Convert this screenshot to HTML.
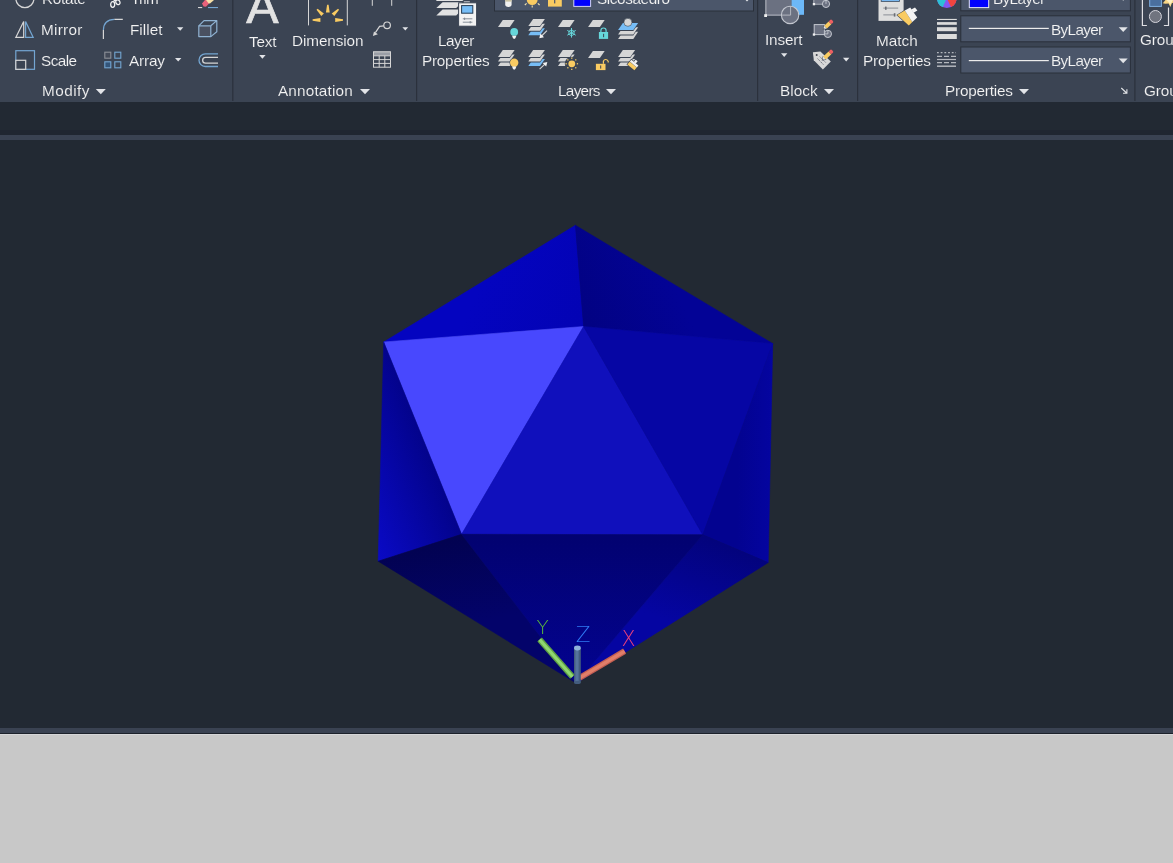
<!DOCTYPE html>
<html><head><meta charset="utf-8">
<style>
html,body{margin:0;padding:0;}
body{width:1173px;height:863px;overflow:hidden;background:#222933;position:relative;font-family:"Liberation Sans","DejaVu Sans",sans-serif;color:#f4f4f4;font-size:15.3px;}
#ribbon{position:absolute;left:0;top:0;width:1173px;height:102px;background:#3b4453;overflow:hidden;}
.t{position:absolute;white-space:nowrap;will-change:transform;line-height:20px;height:20px;-webkit-text-stroke:0.12px #3b4453;}
.t.d{-webkit-text-stroke-color:#4b566a;}
#band{position:absolute;left:0;top:102px;width:1173px;height:33px;background:#222933;}
#line1{position:absolute;left:0;top:135px;width:1173px;height:5px;background:#3a4252;}
#view{position:absolute;left:0;top:140px;width:1173px;height:588px;background:#222933;}
#line2{position:absolute;left:0;top:728px;width:1173px;height:5px;background:#3a4252;}
#line3{position:absolute;left:0;top:733px;width:1173px;height:1px;background:#1c212a;}
#line4{position:absolute;left:0;top:734px;width:1173px;height:1px;background:#d6d6d8;}
#bottom{position:absolute;left:0;top:735px;width:1173px;height:128px;background:#c8c8c8;}
svg{position:absolute;left:0;top:0;}
</style></head><body>
<div id="ribbon">
<!-- RIBBON-START -->
<svg width="1173" height="102" viewBox="0 0 1173 102">
<g fill="#2b313c">
<rect x="232.2" y="0" width="1.2" height="101"/>
<rect x="416.0" y="0" width="1.2" height="101"/>
<rect x="757.0" y="0" width="1.2" height="101"/>
<rect x="857.0" y="0" width="1.2" height="101"/>
<rect x="1134.3" y="0" width="1.2" height="101"/>
</g>
<polygon points="95.8,89.0 105.8,89.0 100.8,94.2" fill="#e2e4e8" />
<polygon points="360.0,89.0 370.0,89.0 365.0,94.2" fill="#e2e4e8" />
<polygon points="606.0,89.0 616.0,89.0 611.0,94.2" fill="#e2e4e8" />
<polygon points="824.0,89.0 834.0,89.0 829.0,94.2" fill="#e2e4e8" />
<polygon points="1019.0,89.0 1029.0,89.0 1024.0,94.2" fill="#e2e4e8" />
<polygon points="177.0,27.2 183.4,27.2 180.2,30.8" fill="#e2e4e8" />
<polygon points="175.0,58.0 181.4,58.0 178.2,61.6" fill="#e2e4e8" />
<polygon points="259.2,55.0 265.6,55.0 262.4,58.8" fill="#e2e4e8" />
<polygon points="402.4,27.3 408.2,27.3 405.3,30.6" fill="#e2e4e8" />
<polygon points="781.0,53.2 787.4,53.2 784.2,56.9" fill="#e2e4e8" />
<polygon points="843.0,57.8 849.4,57.8 846.2,61.5" fill="#e2e4e8" />
<circle cx="24.9" cy="-1.3" r="9" fill="none" stroke="#d6d6d6" stroke-width="1.3"/>
<g fill="none" stroke="#f2f2f2" stroke-width="1.3"><ellipse cx="112.7" cy="4.5" rx="2" ry="2.8"/><ellipse cx="117.9" cy="2.3" rx="2" ry="2.4" transform="rotate(-35 117.9 2.3)"/><path d="M113.6 1.8 L114.6 0 M115.8 1.2 L115 0"/></g>
<g fill="none" stroke-width="1.2"><polygon points="15.8,37.4 23.7,21.6 23.7,37.4" stroke="#d6d6d6"/><polygon points="25.6,21.6 33.2,37.4 25.6,37.4" stroke="#74a6d2"/></g>
<g fill="none" stroke-width="1.2"><path d="M103.4 29.9 Q103.6 19.6 114.4 19.3" stroke="#74a6d2"/><path d="M103.4 38.9 V29.9 M114.4 19.3 H122.8" stroke="#d6d6d6"/></g>
<g fill="none" stroke-width="1.2"><rect x="15.8" y="50.7" width="18.7" height="18.6" stroke="#74a6d2"/><rect x="15.8" y="60.3" width="9.9" height="9" fill="#3b4453" stroke="#d6d6d6"/></g>
<g stroke-width="1.1"><rect x="104.8" y="52.2" width="6" height="6" fill="#434a58" stroke="#8c9098"/><rect x="114.8" y="52.2" width="6" height="6" fill="none" stroke="#74a6d2"/><rect x="104.8" y="61.8" width="6" height="6" fill="#33557a" stroke="#74a6d2"/><rect x="114.8" y="61.8" width="6" height="6" fill="none" stroke="#74a6d2"/></g>
<polygon points="202,3.6 205,0 209,0 209.6,3 206,6.8 203.6,6.4" fill="#e8627a"/>
<polygon points="206,0 214,0 210,3.4 208.4,3.2" fill="#f6dfa6"/>
<rect x="198" y="7" width="4.2" height="1.1" fill="#d6d6d6"/><rect x="208" y="7" width="10" height="1.1" fill="#74a6d2"/>
<g fill="none" stroke="#8fb2d2" stroke-width="1.2" stroke-linejoin="round"><rect x="198.8" y="25.8" width="12" height="10.8" fill="#4a5161"/><path d="M198.8 25.8 L204 20.6 H216.8 L210.8 25.8 M216.8 20.6 V31.8 L210.8 36.6"/></g>
<g fill="none" stroke-width="1.3"><path d="M218 53.9 H205.3 A6.3 6.3 0 0 0 205.3 66.5 H218" stroke="#74a6d2"/><path d="M218 57.3 H205.6 A2.95 2.95 0 0 0 205.6 63.2 H218" stroke="#d6d6d6"/></g>
<text x="262.4" y="23.4" text-anchor="middle" font-size="48.5" fill="#e2e2e2" stroke="#e2e2e2" stroke-width="0.7" font-family="Liberation Sans, sans-serif">A</text>
<rect x="308" y="0" width="1" height="25.4" fill="#d6d6d6"/><rect x="346.8" y="0" width="1" height="25.4" fill="#d6d6d6"/>
<polygon points="329.7,12.6 328.6,4.8 327.1,4.8 325.9,12.6" fill="#f9cb62" />
<polygon points="323.9,13.5 317.6,8.7 316.5,9.8 321.3,16.1" fill="#f9cb62" />
<polygon points="334.3,16.1 339.1,9.8 338.0,8.7 331.7,13.5" fill="#f9cb62" />
<polygon points="320.4,18.1 312.6,19.2 312.6,20.7 320.4,21.9" fill="#f9cb62" />
<polygon points="335.2,21.9 343.0,20.8 343.0,19.2 335.2,18.1" fill="#f9cb62" />
<rect x="371.8" y="0" width="1" height="5.8" fill="#d6d6d6"/><rect x="391.2" y="0" width="1" height="5.8" fill="#d6d6d6"/>
<g fill="none" stroke="#d6d6d6" stroke-width="1.2"><circle cx="387.1" cy="25.3" r="3.3"/><path d="M383.8 25.8 L379.6 26.3 L375.4 32.6"/></g>
<polygon points="372.9,35.9 374.0,31.4 377.9,34.2" fill="#d6d6d6" />
<rect x="373.3" y="51.6" width="17.2" height="4" fill="#9a9ea6"/>
<g fill="none" stroke="#d6d6d6" stroke-width="1"><rect x="373.5" y="51.8" width="17" height="15.4"/><path d="M373.5 55.8 H390.5 M373.5 59.6 H390.5 M373.5 63.4 H390.5 M379.2 55.8 V67.2 M384.8 55.8 V67.2"/></g>
<polygon points="441.0,-3.5 468.0,-3.5 462.4,0.9 435.8,0.9" fill="#e2e2e2" />
<polygon points="442.6,2.2 462.3,2.2 456.2,8.0 436.3,8.0" fill="#e2e2e2" />
<polygon points="442.6,9.5 462.3,9.5 456.2,15.5 436.3,15.5" fill="#e2e2e2" />
<rect x="463.8" y="1.2" width="6" height="2.2" fill="#b8bcc4"/>
<rect x="458.6" y="2.8" width="18" height="23.4" fill="#f2f2f2" stroke="#3b4453" stroke-width="1"/>
<rect x="461.6" y="5.6" width="11.2" height="7.6" fill="#76bdf6" stroke="#243a52" stroke-width="1"/>
<g stroke="#7c8490" stroke-width="0.9"><path d="M462.8 18.8 H472.4 M464.6 17.6 V20 M462.8 22.2 H472.4 M470.2 21 V23.4"/></g>
<rect x="494.5" y="-3" width="259" height="14" fill="#4b566a" stroke="#2a303b" stroke-width="1"/>
<path d="M505.2 0 H511.6 V4.2 Q511.6 6.9 508.4 6.9 Q505.2 6.9 505.2 4.2 Z" fill="#f2f2f2"/>
<rect x="505.2" y="0" width="6.4" height="1.6" fill="#c9c2a4"/>
<circle cx="532.2" cy="-0.3" r="5.4" fill="#f9cb62"/>
<g stroke="#f3e3b0" stroke-width="1.1"><path d="M526.6 3.4 L524.8 5 M532.2 5.6 V7.6 M537.8 3.4 L539.6 5"/></g>
<rect x="548" y="-2" width="13.8" height="8.6" fill="#f9cb62"/><rect x="554.1" y="0" width="1.2" height="3.4" fill="#4b566a"/>
<rect x="573.8" y="-2" width="16.8" height="8.4" fill="#0000ff" stroke="#d0d0f8" stroke-width="1"/>
<polygon points="743.6,-2.2 750.4,-2.2 747.0,1.6" fill="#e2e4e8" />
<polygon points="502.8,19.9 514.6,19.9 509.8,26.9 498.0,26.9" fill="#d6d6d6" />
<circle cx="514.2" cy="31.9" r="3.9" fill="#66d6da"/>
<polygon points="512.0,35.8 516.4,35.8 515.4,38.2 514.2,38.9 513.0,38.2" fill="#f2f2f2" />
<polygon points="533.1,28.3 544.9,28.3 540.1,35.3 528.3,35.3" fill="#76bdf6" />
<polygon points="533.1,24.7 544.9,24.7 540.1,31.7 528.3,31.7" fill="#3b4453" />
<polygon points="533.1,23.7 544.9,23.7 540.1,30.7 528.3,30.7" fill="#d6d6d6" />
<polygon points="533.1,20.1 544.9,20.1 540.1,27.1 528.3,27.1" fill="#3b4453" />
<polygon points="533.1,19.1 544.9,19.1 540.1,26.1 528.3,26.1" fill="#d6d6d6" />
<path d="M547 30.6 L541.6 36" stroke="#d6d6d6" stroke-width="1.1"/>
<polygon points="539.3,38.3 540.4,33.6 544.0,37.2" fill="#f2f2f2" />
<polygon points="562.8,19.9 574.6,19.9 569.8,26.9 558.0,26.9" fill="#d6d6d6" />
<g stroke="#66d6da" stroke-width="1" fill="none"><path d="M571.5 28 V37.6 M567.3 30.4 L575.7 35.2 M567.3 35.2 L575.7 30.4"/><polygon points="571.5,29.8 574.1,31.3 574.1,34.3 571.5,35.8 568.9,34.3 568.9,31.3" stroke-width="0.9"/></g>
<polygon points="592.9,19.9 604.7,19.9 599.9,26.9 588.1,26.9" fill="#d6d6d6" />
<rect x="598.9" y="32" width="9.2" height="6.9" fill="#66d6da"/>
<path d="M600.9 32 V30.6 A2.6 2.6 0 0 1 606.1 30.6 V32" fill="none" stroke="#66d6da" stroke-width="1.2"/>
<rect x="603.1" y="33.8" width="1" height="3.4" fill="#3b4453"/>
<polygon points="622.9,31.8 638.1,31.8 633.3,38.9 618.1,38.9" fill="#d6d6d6" />
<polygon points="622.9,28.3 638.1,28.3 633.3,35.4 618.1,35.4" fill="#3b4453" />
<polygon points="622.9,27.3 638.1,27.3 633.3,34.4 618.1,34.4" fill="#d6d6d6" />
<polygon points="622.9,23.9 638.1,23.9 633.3,31.0 618.1,31.0" fill="#3b4453" />
<polygon points="622.9,22.9 638.1,22.9 633.3,30.0 618.1,30.0" fill="#76bdf6" />
<circle cx="627.9" cy="22.3" r="4" fill="#d6d6d6" stroke="#3b4453" stroke-width="0.6"/>
<polygon points="502.8,59.1 514.6,59.1 509.8,66.1 498.0,66.1" fill="#d6d6d6" />
<polygon points="502.8,55.6 514.6,55.6 509.8,62.6 498.0,62.6" fill="#3b4453" />
<polygon points="502.8,54.6 514.6,54.6 509.8,61.6 498.0,61.6" fill="#d6d6d6" />
<polygon points="502.8,51.1 514.6,51.1 509.8,58.1 498.0,58.1" fill="#3b4453" />
<polygon points="502.8,50.1 514.6,50.1 509.8,57.1 498.0,57.1" fill="#d6d6d6" />
<circle cx="514.2" cy="62.7" r="4.7" fill="#3b4453"/><circle cx="514.2" cy="62.7" r="4.2" fill="#f9cb62"/>
<polygon points="512.0,66.5 516.4,66.5 515.4,69.0 514.2,69.7 513.0,69.0" fill="#f2f2f2" />
<polygon points="533.1,59.1 544.9,59.1 540.1,66.1 528.3,66.1" fill="#76bdf6" />
<polygon points="533.1,55.6 544.9,55.6 540.1,62.6 528.3,62.6" fill="#3b4453" />
<polygon points="533.1,54.6 544.9,54.6 540.1,61.6 528.3,61.6" fill="#d6d6d6" />
<polygon points="533.1,51.1 544.9,51.1 540.1,58.1 528.3,58.1" fill="#3b4453" />
<polygon points="533.1,50.1 544.9,50.1 540.1,57.1 528.3,57.1" fill="#d6d6d6" />
<path d="M539.6 69.2 L545.4 63.6" stroke="#d6d6d6" stroke-width="1.1"/>
<polygon points="547.3,61.9 546.2,66.6 542.6,63.0" fill="#f2f2f2" />
<polygon points="562.8,59.1 574.6,59.1 569.8,66.1 558.0,66.1" fill="#d6d6d6" />
<polygon points="562.8,55.6 574.6,55.6 569.8,62.6 558.0,62.6" fill="#3b4453" />
<polygon points="562.8,54.6 574.6,54.6 569.8,61.6 558.0,61.6" fill="#d6d6d6" />
<polygon points="562.8,51.1 574.6,51.1 569.8,58.1 558.0,58.1" fill="#3b4453" />
<polygon points="562.8,50.1 574.6,50.1 569.8,57.1 558.0,57.1" fill="#d6d6d6" />
<circle cx="571.8" cy="63.8" r="7" fill="#3b4453"/>
<circle cx="571.8" cy="63.8" r="3.4" fill="#f9cb62"/>
<rect x="576.8" y="63.1" width="1.3" height="1.3" fill="#e9c56a"/>
<rect x="575.1" y="67.1" width="1.3" height="1.3" fill="#e9c56a"/>
<rect x="571.1" y="68.7" width="1.3" height="1.3" fill="#e9c56a"/>
<rect x="567.2" y="67.1" width="1.3" height="1.3" fill="#e9c56a"/>
<rect x="565.5" y="63.1" width="1.3" height="1.3" fill="#e9c56a"/>
<rect x="567.2" y="59.2" width="1.3" height="1.3" fill="#e9c56a"/>
<rect x="571.1" y="57.5" width="1.3" height="1.3" fill="#e9c56a"/>
<rect x="575.1" y="59.2" width="1.3" height="1.3" fill="#e9c56a"/>
<polygon points="592.9,51.0 604.7,51.0 599.9,58.0 588.1,58.0" fill="#d6d6d6" />
<rect x="595.9" y="63.8" width="9.6" height="6.3" fill="#f9cb62"/>
<path d="M603.4 63.8 V61.2 A2.5 2.5 0 0 1 608.2 61.4 V62.6" fill="none" stroke="#f9cb62" stroke-width="1.2"/>
<rect x="600.2" y="65.4" width="1" height="3.2" fill="#3b4453"/>
<polygon points="622.9,58.9 635.1,58.9 630.3,65.9 618.1,65.9" fill="#d6d6d6" />
<polygon points="622.9,55.5 635.1,55.5 630.3,62.5 618.1,62.5" fill="#3b4453" />
<polygon points="622.9,54.5 635.1,54.5 630.3,61.5 618.1,61.5" fill="#d6d6d6" />
<polygon points="622.9,51.0 635.1,51.0 630.3,58.0 618.1,58.0" fill="#3b4453" />
<polygon points="622.9,50.0 635.1,50.0 630.3,57.0 618.1,57.0" fill="#d6d6d6" />
<g transform="translate(633.2 64.6) rotate(40)"><rect x="-5.2" y="-3.2" width="10.4" height="7.4" fill="#3b4453"/><rect x="-4.6" y="0" width="9.2" height="3.6" fill="#f9cb62"/><rect x="-4.6" y="-2.6" width="9.2" height="2.4" fill="#f2f2f2"/><rect x="-1.3" y="-5.4" width="2.6" height="3" fill="#f2f2f2"/></g>
<rect x="765.4" y="-2" width="26.4" height="17.6" fill="#6b7181"/>
<path d="M765.9 0 V15.1 H791" fill="none" stroke="#b4b8c0" stroke-width="1"/>
<rect x="791.6" y="-2" width="12.4" height="16.8" fill="#6cb8f8"/>
<circle cx="790.1" cy="14.9" r="8.7" fill="#6b7181" stroke="#c4c8d0" stroke-width="1.1"/>
<path d="M790.6 6.4 V15.1 H781.6" fill="none" stroke="#b4b8c0" stroke-width="1"/>
<rect x="764.2" y="14.2" width="2.8" height="2.8" fill="#f0f0f0"/>
<rect x="813.8" y="-2" width="10.4" height="6.2" fill="#6b7181" stroke="#b4b8c0" stroke-width="0.9"/>
<circle cx="826" cy="3.9" r="3.6" fill="#6b7181" stroke="#c4c8d0" stroke-width="1"/>
<path d="M826 0 V3.9" stroke="#c4c8d0" stroke-width="0.9"/>
<rect x="812.8" y="3" width="2.3" height="2.3" fill="#f0f0f0"/>
<rect x="814.2" y="24.6" width="10.2" height="10" fill="#6b7181" stroke="#c4c8d0" stroke-width="1"/>
<circle cx="827.9" cy="33.9" r="3.6" fill="#6b7181" stroke="#c4c8d0" stroke-width="1"/>
<path d="M827.9 30.3 V33.9 H824.4" fill="none" stroke="#c4c8d0" stroke-width="0.9"/>
<rect x="812.8" y="33.4" width="2.3" height="2.3" fill="#f0f0f0"/>
<g transform="translate(823.2 29.3) rotate(-44.1)">
<polygon points="-0.6,0 3.4,-2.6 3.4,2.6" fill="#3b4453"/>
<polygon points="0,0 3.2,-1.9 3.2,1.9" fill="#e4e6ea"/>
<polygon points="0,0 1.4,-0.8 1.4,0.8" fill="#40454f"/>
<rect x="3.2" y="-1.9" width="6.2" height="3.9" fill="#f9cb62"/>
<rect x="9.2" y="-1.9" width="3.6" height="3.9" rx="1.3" fill="#ee5f62"/>
</g>
<polygon points="812.9,52.3 820.4,51.4 830.8,61.4 822.9,69.6 813.8,60.2" fill="#d8d8d8" />
<circle cx="816.7" cy="55" r="1" fill="#40454f"/>
<g stroke="#5a606c" stroke-width="0.9" stroke-dasharray="1.4 0.9"><path d="M817.6 58.6 L823.4 64.6 M819.8 56.6 L826.2 63"/></g>
<g transform="translate(822.2 60.2) rotate(-43.9)">
<polygon points="-0.6,0 3.4,-2.6 3.4,2.6" fill="#3b4453"/>
<polygon points="0,0 3.2,-1.9 3.2,1.9" fill="#e4e6ea"/>
<polygon points="0,0 1.4,-0.8 1.4,0.8" fill="#40454f"/>
<rect x="3.2" y="-1.9" width="7.5" height="3.9" fill="#f9cb62"/>
<rect x="10.5" y="-1.9" width="3.6" height="3.9" rx="1.3" fill="#ee5f62"/>
</g>
<rect x="878.5" y="-2" width="25.1" height="22.9" fill="#dedede"/>
<rect x="881.2" y="-2" width="18.2" height="3.4" fill="#7ab8f0" stroke="#3c4a5e" stroke-width="0.8"/>
<g stroke="#8a8e96" stroke-width="1"><path d="M883.3 8.1 H898.2 M883.3 14.9 H895.2"/></g>
<rect x="885" y="6.6" width="1.6" height="3.2" fill="#6a6e76"/><rect x="893.8" y="13.2" width="1.6" height="3.4" fill="#6a6e76"/>
<polygon points="896.4,15.0 905.0,9.8 913.0,22.0 908.8,26.2" fill="#3b4453" />
<polygon points="897.2,14.9 904.8,10.4 912.3,22.1 908.8,25.6" fill="#f9cb62" />
<polygon points="904.8,10.4 910.2,7.6 917.2,17.4 912.3,22.1" fill="#f4f4f4" />
<polygon points="911.2,9.4 915.0,7.4 917.4,10.6 913.6,12.8" fill="#f4f4f4" />
<clipPath id="cw"><circle cx="946.8" cy="-1.8" r="9.9"/></clipPath>
<g clip-path="url(#cw)"><rect x="936" y="-2" width="22" height="12" fill="#8456f2"/><polygon points="936,-12 946.8,-1.8 941.4,10 930,10" fill="#2cc0d4"/><polygon points="958,-12 946.8,-1.8 952.4,10 962,10" fill="#f2453f"/></g>
<rect x="937" y="18.9" width="19.8" height="1.1" fill="#dcdcdc"/>
<rect x="937" y="22.1" width="19.8" height="2.7" fill="#dcdcdc"/>
<rect x="937" y="27.2" width="19.8" height="4.0" fill="#dcdcdc"/>
<rect x="937" y="34.0" width="19.8" height="5.0" fill="#dcdcdc"/>
<g stroke="#b4b8be" stroke-width="1.2"><path d="M937 52.7 H956" stroke-dasharray="1.8 1.9"/><path d="M937 56.3 H956" stroke-dasharray="5 2"/><path d="M937 59.5 H956"/><path d="M937 62.6 H956" stroke-dasharray="5 2"/><path d="M937 66.2 H956" stroke-width="1.5"/></g>
<rect x="960.8" y="-3" width="169.6" height="13.8" fill="#4b566a" stroke="#2a303b" stroke-width="1"/>
<rect x="960.8" y="15.8" width="169.6" height="26" fill="#4b566a" stroke="#2a303b" stroke-width="1"/>
<rect x="960.8" y="47" width="169.6" height="26" fill="#4b566a" stroke="#2a303b" stroke-width="1"/>
<rect x="969.3" y="-2" width="19.4" height="9.6" fill="#0000ff" stroke="#e4e4f8" stroke-width="1"/>
<rect x="968.8" y="27.8" width="80" height="1.2" fill="#ececec"/><rect x="968.8" y="60" width="80" height="1.2" fill="#ececec"/>
<polygon points="1118.7,27.2 1127.7,27.2 1123.2,32.0" fill="#e2e4e8" />
<polygon points="1118.7,58.5 1127.7,58.5 1123.2,63.3" fill="#e2e4e8" />
<polygon points="1119.5,-3.4 1127.0,-3.4 1123.2,0.8" fill="#e2e4e8" />
<path d="M1121.3 88 L1126.6 93 M1123 93.2 H1126.9 V89.2" fill="none" stroke="#e2e4e8" stroke-width="1.1"/>
<g fill="none" stroke="#e0e0e4" stroke-width="1.2"><path d="M1146.9 -1 H1142.4 V25.5 H1146.9 M1163.9 25.5 H1168.5 V7.4"/></g>
<rect x="1149.7" y="-2" width="11.7" height="8.4" fill="#4a6f9e" stroke="#7fb0e0" stroke-width="1"/>
<circle cx="1155.4" cy="16.5" r="6" fill="#70747f" stroke="#d4d4dc" stroke-width="1"/>
<polygon points="1162.8,3.2 1166.4,-1.0 1174.0,-1.0 1174.0,2.6 1171.8,3.2 1170.4,6.9 1168.6,3.6 1165.4,3.8" fill="#f8d684" />
<polygon points="1166.5,0.0 1173.0,0.0 1170.4,4.6 1168.8,2.4" fill="#fdeec0" />
</svg>
<div class="t" style="left:41.9px;top:-11.3px;letter-spacing:-0.26px">Rotate</div>
<div class="t" style="left:130.6px;top:-11.3px;letter-spacing:-0.78px">Trim</div>
<div class="t" style="left:40.9px;top:19.7px;letter-spacing:0.29px">Mirror</div>
<div class="t" style="left:129.9px;top:19.7px;letter-spacing:0.03px">Fillet</div>
<div class="t" style="left:40.9px;top:50.7px;letter-spacing:-0.57px">Scale</div>
<div class="t" style="left:128.5px;top:50.7px;letter-spacing:-0.15px">Array</div>
<div class="t" style="left:42.1px;top:80.7px;letter-spacing:0.46px">Modify</div>
<div class="t" style="left:249.3px;top:31.7px;letter-spacing:-0.22px">Text</div>
<div class="t" style="left:292.0px;top:30.7px;letter-spacing:-0.09px">Dimension</div>
<div class="t" style="left:277.8px;top:80.7px;letter-spacing:0.17px">Annotation</div>
<div class="t" style="left:437.8px;top:30.7px;letter-spacing:-0.47px">Layer</div>
<div class="t" style="left:422.4px;top:50.7px;letter-spacing:-0.23px">Properties</div>
<div class="t d" style="left:597.1px;top:-11.3px;letter-spacing:-0.39px">Sicosaedro</div>
<div class="t" style="left:558.0px;top:80.7px;letter-spacing:-0.69px">Layers</div>
<div class="t" style="left:765.4px;top:29.7px;letter-spacing:-0.16px">Insert</div>
<div class="t" style="left:779.6px;top:80.7px;letter-spacing:0.04px">Block</div>
<div class="t" style="left:875.7px;top:30.7px;letter-spacing:0.03px">Match</div>
<div class="t" style="left:862.7px;top:50.7px;letter-spacing:-0.19px">Properties</div>
<div class="t d" style="left:992.8px;top:-11.3px;letter-spacing:-0.65px">ByLayer</div>
<div class="t d" style="left:1051.1px;top:19.7px;letter-spacing:-0.66px">ByLayer</div>
<div class="t d" style="left:1051.1px;top:50.7px;letter-spacing:-0.66px">ByLayer</div>
<div class="t" style="left:944.6px;top:80.7px;letter-spacing:-0.19px">Properties</div>
<div class="t" style="left:1139.6px;top:29.7px;letter-spacing:-0.10px">Group</div>
<div class="t" style="left:1144.4px;top:80.7px;letter-spacing:-0.10px">Groups</div>
<!-- RIBBON-END -->
</div>
<div id="band"></div><div style="position:absolute;left:0;top:130px;width:1173px;height:5px;background:#202631"></div>
<div id="line1"></div>
<div id="view"></div>
<div id="line2"></div><div id="line3"></div><div id="line4"></div>
<div id="bottom"></div>
<svg id="scene" width="1173" height="863" viewBox="0 0 1173 863">
<!-- SCENE-START -->
<defs><linearGradient id="g1" gradientUnits="userSpaceOnUse" x1="583.6" y1="326.5" x2="479.5" y2="283.6"><stop offset="0" stop-color="#0303b4"/><stop offset="1" stop-color="#0404c0"/></linearGradient><linearGradient id="g2" gradientUnits="userSpaceOnUse" x1="583.6" y1="326.5" x2="674.0" y2="284.5"><stop offset="0" stop-color="#020282"/><stop offset="1" stop-color="#030396"/></linearGradient><linearGradient id="g3" gradientUnits="userSpaceOnUse" x1="422.6" y1="438.2" x2="341.9" y2="470.8"><stop offset="0" stop-color="#03038c"/><stop offset="1" stop-color="#0a0ac6"/></linearGradient><linearGradient id="g4" gradientUnits="userSpaceOnUse" x1="737.8" y1="439.2" x2="790.0" y2="440.0"><stop offset="0" stop-color="#030390"/><stop offset="1" stop-color="#0505a8"/></linearGradient><linearGradient id="g5" gradientUnits="userSpaceOnUse" x1="461.6" y1="534.3" x2="477.2" y2="622.2"><stop offset="0" stop-color="#020250"/><stop offset="1" stop-color="#03036a"/></linearGradient><linearGradient id="g6" gradientUnits="userSpaceOnUse" x1="576.0" y1="534.5" x2="576.3" y2="683.2"><stop offset="0" stop-color="#020270"/><stop offset="1" stop-color="#030390"/></linearGradient><linearGradient id="g7" gradientUnits="userSpaceOnUse" x1="702.8" y1="534.8" x2="672.2" y2="622.9"><stop offset="0" stop-color="#03037c"/><stop offset="1" stop-color="#0505a2"/></linearGradient></defs>
<polygon points="575.4,225.3 383.7,342.0 583.6,326.5" fill="url(#g1)" stroke="url(#g1)" stroke-width="0.6"/>
<polygon points="575.4,225.3 583.6,326.5 772.7,343.6" fill="url(#g2)" stroke="url(#g2)" stroke-width="0.6"/>
<polygon points="383.7,342.0 583.6,326.5 461.6,534.3" fill="#4848fe" stroke="#4848fe" stroke-width="0.6"/>
<polygon points="583.6,326.5 461.6,534.3 702.8,534.8" fill="#1010bc" stroke="#1010bc" stroke-width="0.6"/>
<polygon points="583.6,326.5 772.7,343.6 702.8,534.8" fill="#0606a4" stroke="#0606a4" stroke-width="0.6"/>
<polygon points="383.7,342.0 461.6,534.3 378.2,561.2" fill="url(#g3)" stroke="url(#g3)" stroke-width="0.6"/>
<polygon points="772.7,343.6 768.2,562.6 702.8,534.8" fill="url(#g4)" stroke="url(#g4)" stroke-width="0.6"/>
<polygon points="378.2,561.2 461.6,534.3 576.3,683.2" fill="url(#g5)" stroke="url(#g5)" stroke-width="0.6"/>
<polygon points="461.6,534.3 702.8,534.8 576.3,683.2" fill="url(#g6)" stroke="url(#g6)" stroke-width="0.6"/>
<polygon points="702.8,534.8 768.2,562.6 576.3,683.2" fill="url(#g7)" stroke="url(#g7)" stroke-width="0.6"/>
<line x1="572.4" y1="676.8" x2="539.6" y2="639.6" stroke="#5ea044" stroke-width="6"/>
<line x1="572.4" y1="676.8" x2="539.6" y2="639.6" stroke="#8fd670" stroke-width="3.2"/>
<line x1="579.4" y1="678" x2="624.6" y2="651.2" stroke="#c25e50" stroke-width="6"/>
<line x1="579.4" y1="678" x2="624.6" y2="651.2" stroke="#e07e6a" stroke-width="3.4"/>
<rect x="574" y="648" width="6.8" height="34.4" fill="#435c7e"/>
<rect x="575.4" y="648" width="3.2" height="34.4" fill="#56749c"/>
<ellipse cx="577.4" cy="682.4" rx="3.4" ry="1.6" fill="#435c7e"/>
<ellipse cx="577.4" cy="648" rx="3.4" ry="2.4" fill="#8fb2da"/>
<text x="542.6" y="633.8" text-anchor="middle" font-size="20" fill="#58b83c" font-family="'DejaVu Sans Light', 'DejaVu Sans ExtraLight', 'Liberation Sans', sans-serif" font-weight="200">Y</text>
<text x="583" y="642" text-anchor="middle" font-size="21.5" fill="#2f7af4" font-family="'DejaVu Sans Light', 'DejaVu Sans ExtraLight', 'Liberation Sans', sans-serif" font-weight="200">Z</text>
<text x="628.6" y="645.6" text-anchor="middle" font-size="20.5" fill="#e8407c" font-family="'DejaVu Sans Light', 'DejaVu Sans ExtraLight', 'Liberation Sans', sans-serif" font-weight="200">X</text>
<!-- SCENE-END -->
</svg>
</body></html>
